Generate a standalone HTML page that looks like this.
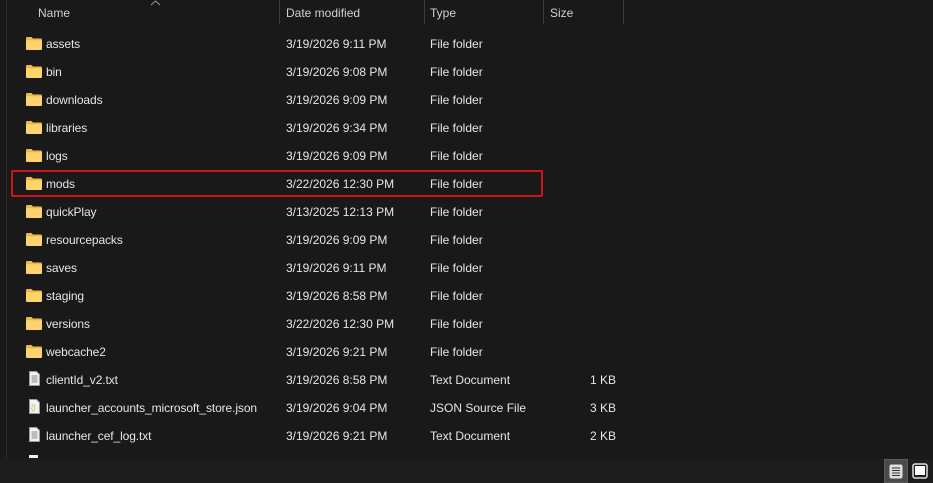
<!DOCTYPE html>
<html><head><meta charset="utf-8"><style>
*{margin:0;padding:0;box-sizing:border-box}
body{width:933px;height:483px;background:#191919;position:relative;overflow:hidden;font-family:"Liberation Sans",sans-serif;font-size:12px;color:#e6e6e6}
.vl{position:absolute;left:6px;top:0;width:1px;height:458px;background:#2e2e2e}
.status{position:absolute;left:0;top:458px;width:933px;height:25px;background:#1c1c1c}
.sep{position:absolute;top:0;width:1px;height:24px;background:#3a3a3a}
.hd{position:absolute;top:6px;color:#d0d0d0}
.row{position:absolute;left:0;width:933px;height:20px}
.row span{position:absolute;top:3px;white-space:nowrap}
.n{left:46px;letter-spacing:-0.1px}.d{left:286px}.t{left:430px}.s{right:317px}
.fold{position:absolute;left:26px;top:3px;width:16px;height:13px}
.doc{position:absolute;left:29px;top:1px;width:11px;height:15px}
.red{position:absolute;left:11px;top:170px;width:532px;height:27px;border:2px solid #d0121c;border-radius:2px}
</style></head><body>
<div class="vl"></div>
<div class="hd" style="left:38px">Name</div>
<svg style="position:absolute;left:150px;top:0" width="11" height="6"><path d="M1 5L5.5 1L10 5" fill="none" stroke="#999" stroke-width="1"/></svg>
<div class="sep" style="left:279px"></div>
<div class="hd" style="left:286px">Date modified</div>
<div class="sep" style="left:424px"></div>
<div class="hd" style="left:430px">Type</div>
<div class="sep" style="left:543px"></div>
<div class="hd" style="left:550px">Size</div>
<div class="sep" style="left:623px"></div>

<svg width="0" height="0" style="position:absolute"><defs>
<symbol id="f" viewBox="0 0 16 13"><path d="M0 1.2Q0 0 1.2 0H5.5L7 1.5H14.8Q16 1.5 16 2.7V11.8Q16 13 14.8 13H1.2Q0 13 0 11.8Z" fill="#e8b94a"/><path d="M0 3.2H16V11.8Q16 13 14.8 13H1.2Q0 13 0 11.8Z" fill="#fcd46a"/></symbol>
<symbol id="d" viewBox="0 0 11 15"><path d="M0.5 0.5H7.5L10.5 3.5V14.5H0.5Z" fill="#f2f2f2" stroke="#9a9a9a"/><path d="M2.5 5H8.5M2.5 7H8.5M2.5 9H8.5M2.5 11H8.5" stroke="#888" stroke-width="1"/></symbol>
</defs></svg>

<div class="row" style="top:34px"><svg class="fold"><use href="#f"/></svg><span class="n">assets</span><span class="d">3/19/2026 9:11 PM</span><span class="t">File folder</span></div>
<div class="row" style="top:62px"><svg class="fold"><use href="#f"/></svg><span class="n">bin</span><span class="d">3/19/2026 9:08 PM</span><span class="t">File folder</span></div>
<div class="row" style="top:90px"><svg class="fold"><use href="#f"/></svg><span class="n">downloads</span><span class="d">3/19/2026 9:09 PM</span><span class="t">File folder</span></div>
<div class="row" style="top:118px"><svg class="fold"><use href="#f"/></svg><span class="n">libraries</span><span class="d">3/19/2026 9:34 PM</span><span class="t">File folder</span></div>
<div class="row" style="top:146px"><svg class="fold"><use href="#f"/></svg><span class="n">logs</span><span class="d">3/19/2026 9:09 PM</span><span class="t">File folder</span></div>
<div class="row" style="top:174px"><svg class="fold"><use href="#f"/></svg><span class="n">mods</span><span class="d">3/22/2026 12:30 PM</span><span class="t">File folder</span></div>
<div class="row" style="top:202px"><svg class="fold"><use href="#f"/></svg><span class="n">quickPlay</span><span class="d">3/13/2025 12:13 PM</span><span class="t">File folder</span></div>
<div class="row" style="top:230px"><svg class="fold"><use href="#f"/></svg><span class="n">resourcepacks</span><span class="d">3/19/2026 9:09 PM</span><span class="t">File folder</span></div>
<div class="row" style="top:258px"><svg class="fold"><use href="#f"/></svg><span class="n">saves</span><span class="d">3/19/2026 9:11 PM</span><span class="t">File folder</span></div>
<div class="row" style="top:286px"><svg class="fold"><use href="#f"/></svg><span class="n">staging</span><span class="d">3/19/2026 8:58 PM</span><span class="t">File folder</span></div>
<div class="row" style="top:314px"><svg class="fold"><use href="#f"/></svg><span class="n">versions</span><span class="d">3/22/2026 12:30 PM</span><span class="t">File folder</span></div>
<div class="row" style="top:342px"><svg class="fold"><use href="#f"/></svg><span class="n">webcache2</span><span class="d">3/19/2026 9:21 PM</span><span class="t">File folder</span></div>
<div class="row" style="top:370px"><svg class="doc"><use href="#d"/></svg><span class="n">clientId_v2.txt</span><span class="d">3/19/2026 8:58 PM</span><span class="t">Text Document</span><span class="s">1 KB</span></div>
<div class="row" style="top:398px"><svg class="doc" viewBox="0 0 11 15"><path d="M0.5 0.5H7.5L10.5 3.5V14.5H0.5Z" fill="#f2f2f2" stroke="#9a9a9a"/><text x="2" y="11" font-size="7" fill="#c8b030" font-family="Liberation Sans">{}</text></svg><span class="n">launcher_accounts_microsoft_store.json</span><span class="d">3/19/2026 9:04 PM</span><span class="t">JSON Source File</span><span class="s">3 KB</span></div>
<div class="row" style="top:426px"><svg class="doc"><use href="#d"/></svg><span class="n">launcher_cef_log.txt</span><span class="d">3/19/2026 9:21 PM</span><span class="t">Text Document</span><span class="s">2 KB</span></div>
<div style="position:absolute;left:29px;top:455px;width:9px;height:3px;background:#eee"></div>
<div class="red"></div>
<div class="status"></div>
<div style="position:absolute;left:884px;top:459px;width:24px;height:24px;background:#4a4a4a;border:1px solid #5a5a5a"></div>
<svg style="position:absolute;left:889px;top:464px" width="14" height="15"><rect x="0.5" y="0.5" width="13" height="14" rx="2" fill="#ddd"/><path d="M3 4H11M3 6.5H11M3 9H11M3 11.5H11" stroke="#333"/></svg>
<svg style="position:absolute;left:912px;top:463px" width="16" height="16"><rect x="1" y="1" width="14" height="14" rx="2" fill="none" stroke="#ddd" stroke-width="1.5"/><rect x="3" y="3" width="10" height="9" fill="#fff"/></svg>
</body></html>
